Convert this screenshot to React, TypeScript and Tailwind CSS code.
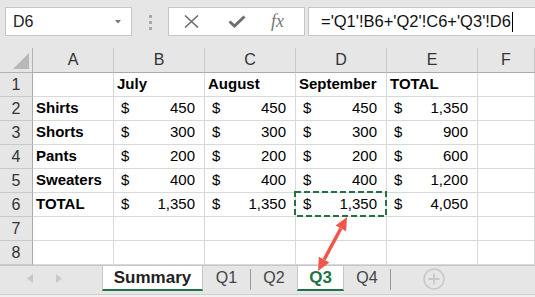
import React from 'react';

type Row = {
  label: string;
  values?: string[];
  headers?: string[];
};

const rows: Row[] = [
  { label: '', headers: ['July', 'August', 'September', 'TOTAL'] },
  { label: 'Shirts', values: ['450', '450', '450', '1,350'] },
  { label: 'Shorts', values: ['300', '300', '300', '900'] },
  { label: 'Pants', values: ['200', '200', '200', '600'] },
  { label: 'Sweaters', values: ['400', '400', '400', '1,200'] },
  { label: 'TOTAL', values: ['1,350', '1,350', '1,350', '4,050'] },
  { label: '' },
  { label: '' },
];

const columns = ['A', 'B', 'C', 'D', 'E', 'F'];

const font = { fontFamily: '"Liberation Sans", Arial, sans-serif' };

function Toolbar() {
  return (
    <div className="flex h-[48px] items-start bg-[#e6e6e6] pt-[7px]">
      {/* Name box */}
      <div className="ml-[5px] flex h-[29px] w-[127px] items-center justify-between border border-[#c6c6c6] bg-white pl-[7px] pr-[10px]">
        <span className="text-[16px] text-[#222]">D6</span>
        <svg width="6" height="4" viewBox="0 0 6 4">
          <path d="M0 0 L6 0 L3 3.5 Z" fill="#777" />
        </svg>
      </div>

      {/* grip dots */}
      <div className="ml-[17px] mt-[8px] flex flex-col gap-[3px]">
        <span className="h-[3px] w-[3px] bg-[#a8a8a8]" />
        <span className="h-[3px] w-[3px] bg-[#a8a8a8]" />
        <span className="h-[3px] w-[3px] bg-[#a8a8a8]" />
      </div>

      {/* cancel / enter / fx */}
      <div className="ml-[16px] flex h-[29px] w-[137px] items-center border border-[#c6c6c6] bg-white">
        <svg className="ml-[15px]" width="15" height="13" viewBox="0 0 15 13">
          <path d="M1 0.5 L14 12.5 M14 0.5 L1 12.5" stroke="#6e6e6e" strokeWidth="1.6" fill="none" />
        </svg>
        <svg className="ml-[29px]" width="18" height="13" viewBox="0 0 18 13">
          <path d="M1.5 6.5 L6.5 11 L16.5 1.5" stroke="#6e6e6e" strokeWidth="3" fill="none" />
        </svg>
        <span
          className="ml-[25px] text-[18px] italic text-[#777]"
          style={{ fontFamily: '"Liberation Serif", "Times New Roman", serif' }}
        >
          fx
        </span>
      </div>

      {/* formula input */}
      <div className="ml-[3px] flex h-[29px] flex-1 items-center border-y border-l border-[#c6c6c6] bg-white pl-[12px]">
        <span className="text-[16.5px] text-[#111]">='Q1'!B6+'Q2'!C6+'Q3'!D6</span>
        <span className="ml-[1px] h-[20px] w-[1px] bg-black" />
      </div>
    </div>
  );
}

function Grid() {
  return (
    <div className="grid grid-cols-[33px_81px_91px_91px_91px_91px_57px]">
      {/* corner */}
      <div className="relative h-[25px] border-b border-r border-[#b3b3b3] bg-[#e6e6e6]">
        <svg className="absolute bottom-[3px] right-[3px]" width="16" height="16" viewBox="0 0 16 16">
          <path d="M16 0 L16 16 L0 16 Z" fill="#b8b8b8" />
        </svg>
      </div>
      {columns.map((c) => (
        <div
          key={c}
          className="flex h-[25px] items-center justify-center border-b border-r border-b-[#ababab] border-r-[#c9c9c9] bg-[#e6e6e6] text-[16px] text-[#333]"
        >
          {c}
        </div>
      ))}

      {rows.map((r, i) => (
        <React.Fragment key={i}>
          <div className="flex h-[24px] items-center justify-center border-b border-r border-b-[#c9c9c9] border-r-[#ababab] bg-[#e6e6e6] text-[16px] text-[#333]">
            {i + 1}
          </div>
          <div className="flex h-[24px] items-center border-b border-r border-[#d9d9d9] pl-[3px] text-[15px] font-bold text-black">
            {r.label}
          </div>
          {[0, 1, 2, 3].map((j) => (
            <div
              key={j}
              className="relative flex h-[24px] items-center justify-between border-b border-r border-[#d9d9d9] pl-[7px] pr-[9px] text-[15px] text-black"
            >
              {r.headers && <span className="-ml-[4px] font-bold">{r.headers[j]}</span>}
              {r.values && (
                <>
                  <span>$</span>
                  <span>{r.values[j]}</span>
                </>
              )}
              {i === 5 && j === 2 && (
                <svg
                  className="pointer-events-none absolute left-[-2px] top-[-2px]"
                  width="93"
                  height="26"
                  viewBox="0 0 93 26"
                >
                  <rect
                    x="1"
                    y="1"
                    width="91"
                    height="24"
                    fill="none"
                    stroke="#217346"
                    strokeWidth="2"
                    strokeDasharray="6 3"
                  />
                </svg>
              )}
            </div>
          ))}
          <div className="h-[24px] border-b border-r border-[#d9d9d9]" />
        </React.Fragment>
      ))}
    </div>
  );
}

function SheetTabs() {
  return (
    <div className="flex h-[33px] flex-col border-t border-[#c6c6c6] bg-[#e6e6e6]">
      <div className="flex h-[29px] items-start">
        <div className="flex h-[24px] w-[102px] items-center pl-[27px]">
          <svg width="6" height="9" viewBox="0 0 6 9">
            <path d="M6 0 L6 9 L0 4.5 Z" fill="#c8c8c8" />
          </svg>
          <svg className="ml-[23px]" width="6" height="9" viewBox="0 0 6 9">
            <path d="M0 0 L0 9 L6 4.5 Z" fill="#c8c8c8" />
          </svg>
        </div>
        <div className="flex h-[25px] w-[101px] items-center justify-center border-x border-[#c6c6c6] border-b-2 border-b-[#217346] bg-white text-[17px] font-bold text-[#222]">
          Summary
        </div>
        <div className="flex h-[24px] w-[47px] items-center justify-center text-[16px] text-[#444]">Q1</div>
        <div className="mt-[3px] h-[21px] w-[1px] bg-[#9a9a9a]" />
        <div className="flex h-[24px] w-[46px] items-center justify-center text-[16px] text-[#444]">Q2</div>
        <div className="flex h-[25px] w-[47px] items-center justify-center border-x border-[#c6c6c6] border-b-2 border-b-[#217346] bg-white text-[17px] font-bold text-[#217346]">
          Q3
        </div>
        <div className="flex h-[24px] w-[46px] items-center justify-center text-[16px] text-[#444]">Q4</div>
        <div className="mt-[3px] h-[21px] w-[1px] bg-[#9a9a9a]" />
        <div className="ml-[32px] mt-[2px]">
          <svg width="22" height="22" viewBox="0 0 22 22">
            <circle cx="11" cy="11" r="10" fill="none" stroke="#c8c8c8" strokeWidth="1.5" />
            <path d="M11 5.5 L11 16.5 M5.5 11 L16.5 11" stroke="#c8c8c8" strokeWidth="1.8" />
          </svg>
        </div>
      </div>
      <div className="h-[4px] border-t border-[#cfcfcf] bg-[#f0f0f0]" />
    </div>
  );
}

export default function App() {
  return (
    <div className="relative h-[297px] w-[535px] overflow-hidden bg-white" style={font}>
      <Toolbar />
      <Grid />
      <SheetTabs />

      {/* red double-headed arrow */}
      <svg className="pointer-events-none absolute left-0 top-0" width="535" height="297" viewBox="0 0 535 297">
        <line x1="340.8" y1="228.5" x2="324.2" y2="259.5" stroke="#f0574a" strokeWidth="3.5" />
        <path d="M347 217 L346.1 231.3 L335.6 225.6 Z" fill="#f0574a" />
        <path d="M318 271 L318.9 256.7 L329.4 262.4 Z" fill="#f0574a" />
      </svg>
    </div>
  );
}
